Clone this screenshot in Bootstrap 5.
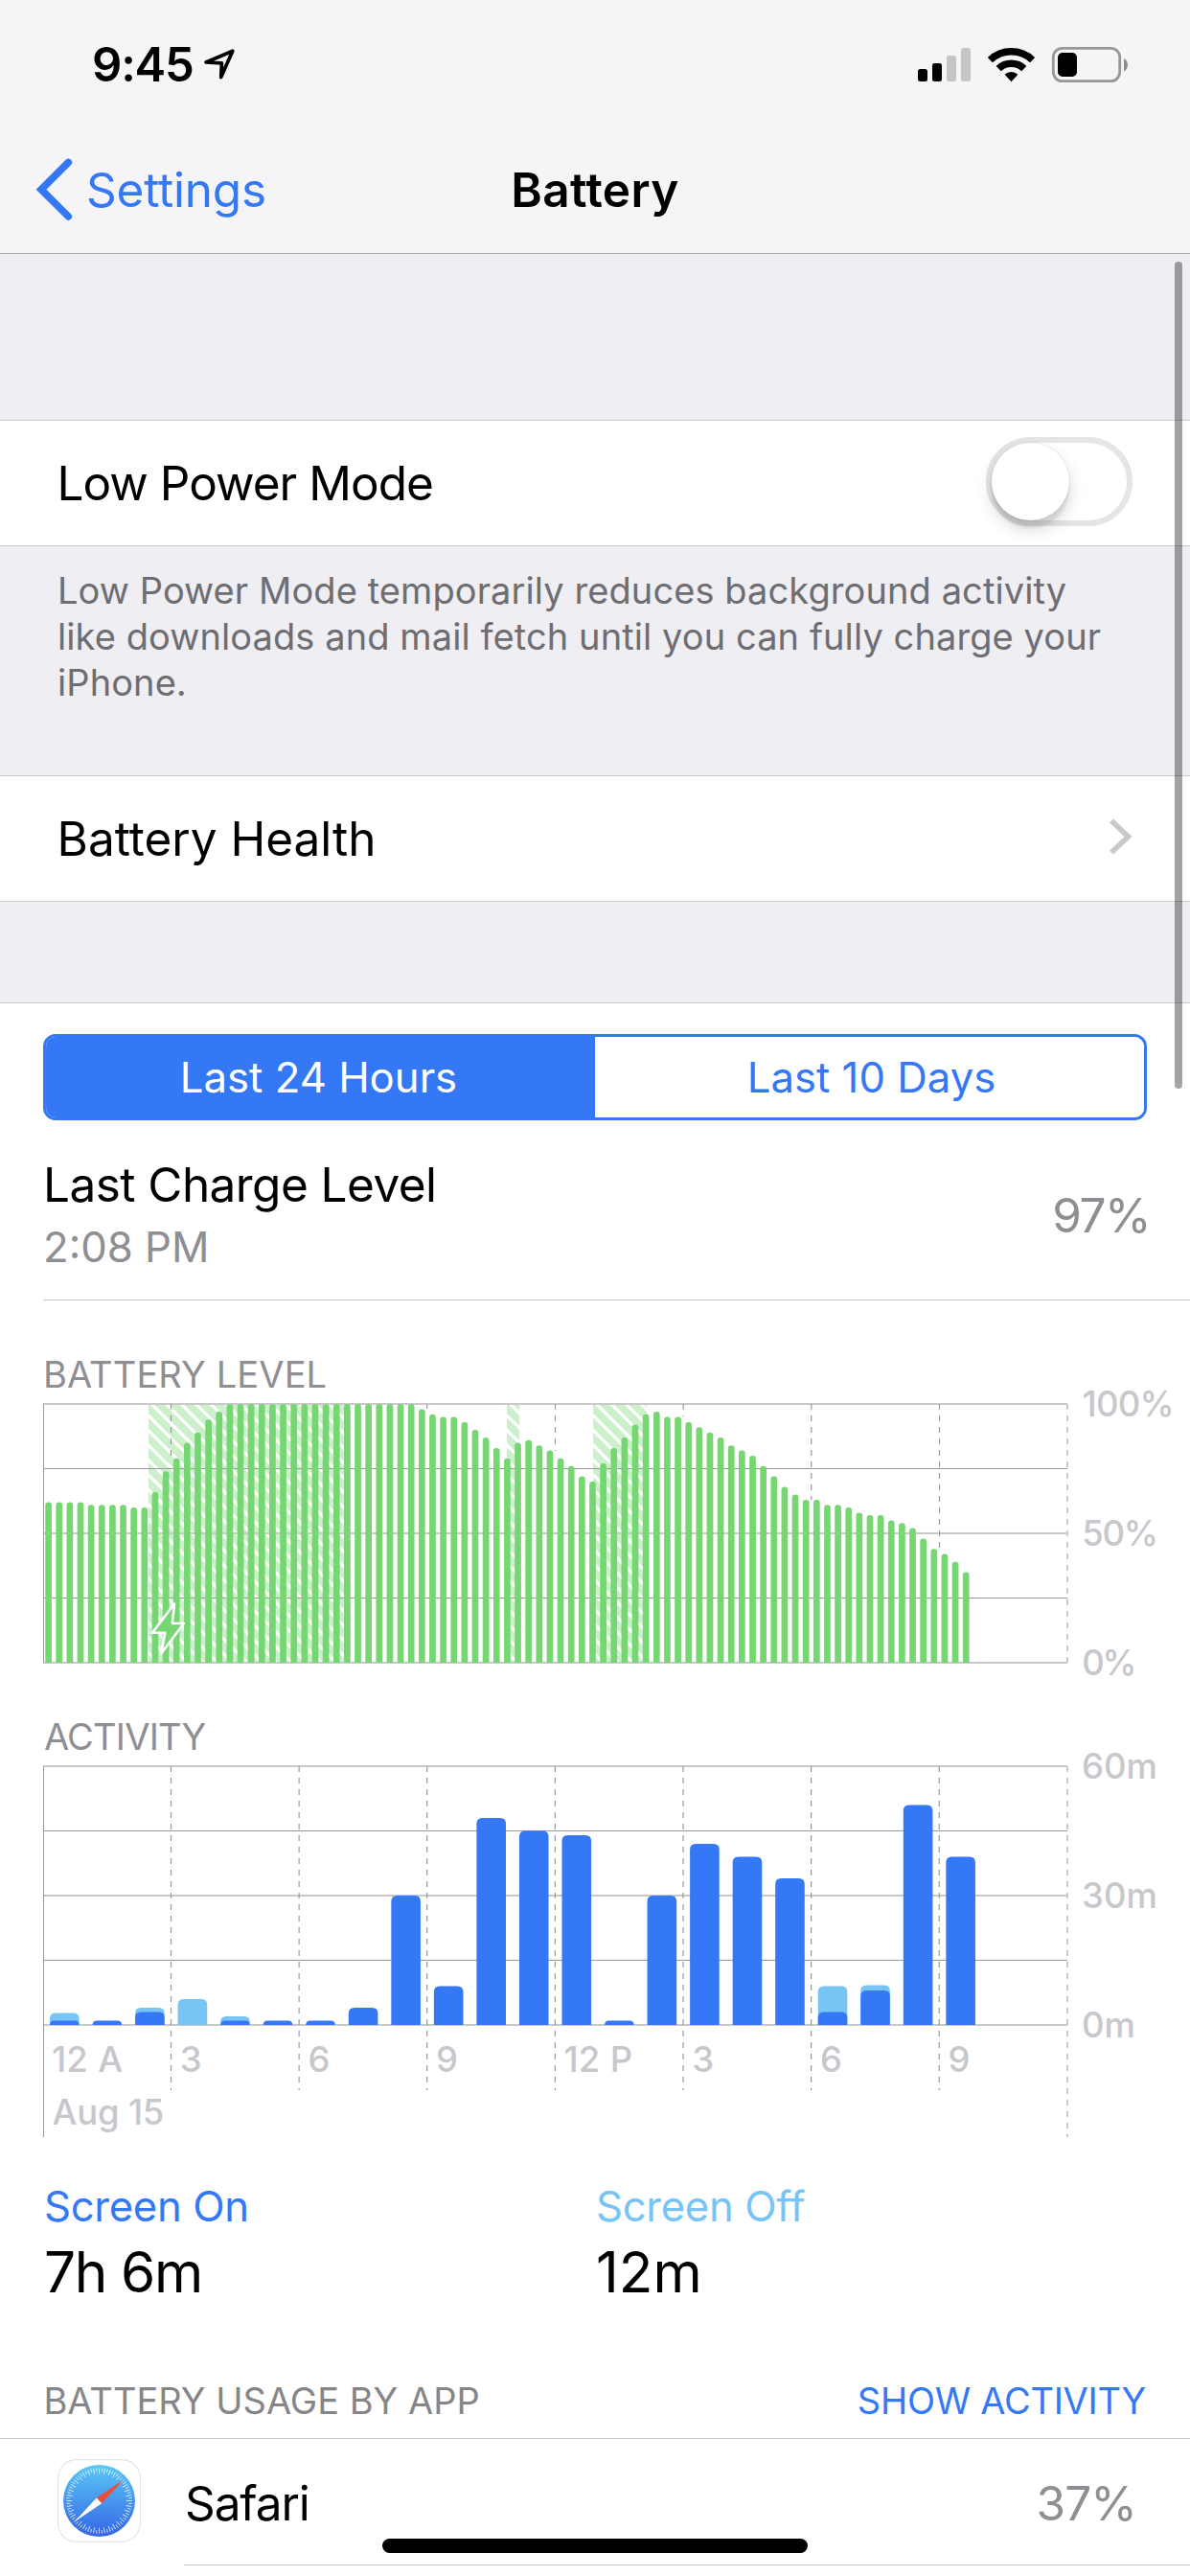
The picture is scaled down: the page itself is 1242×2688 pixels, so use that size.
<!DOCTYPE html>
<html lang="en">
<head>
<meta charset="utf-8">
<meta name="viewport" content="width=device-width, initial-scale=1">
<title>Battery</title>
<link href="https://cdn.jsdelivr.net/npm/bootstrap@5.3.0/dist/css/bootstrap.min.css" rel="stylesheet">
<style>
  :root { --tint: #3478f6; --sky: #78c4f5; --hair: #c8c7cc; --dim: #8e8e93; }
  html, body { overflow: hidden; }
  body { width: 1242px; height: 2688px; background: #efeef3; color: #000; font-family: Inter, "Liberation Sans", sans-serif; font-size: 49.5px; }
  svg { display: block; flex: none; overflow: visible; }
  .top-bar { height: 265px; background: #f5f5f7; border-bottom: 1px solid #a9a9ac; }
  .status-row { height: 134px; padding: 0 65px 0 96px; line-height: 134px; }
  .clock { font-weight: 600; font-size: 49px; letter-spacing: -1.2px; padding-top: 2px; }
  .nav-row { height: 130px; padding-bottom: 2px; line-height: 128px; }
  .nav-back { width: 400px; padding-left: 36px; color: var(--tint); letter-spacing: -.2px; text-decoration: none; }
  .nav-title { font-size: 49.5px; font-weight: 600; letter-spacing: .36px; line-height: inherit; }
  .gap-top { height: 173px; }
  .gap-mid { height: 105px; }
  .cell-row { height: 132px; padding: 0 60px 0 59.5px; background: #fff; border-top: 1px solid var(--hair); border-bottom: 1px solid var(--hair); }
  .cell-note { height: 239px; padding: 22px 60px 0 60px; color: #6d6d72; font-size: 38px; line-height: 48px; letter-spacing: .09px; }
  .toggle { width: 153px; height: 93px; margin-bottom: 3px; border: 6px solid #e5e5e5; border-radius: 47px; background: #fff; }
  .toggle-knob { width: 81px; height: 81px; border-radius: 50%; background: #fff; box-shadow: 0 9px 18px rgba(0,0,0,.16), 0 8px 3px rgba(0,0,0,.08), 0 0 2px rgba(0,0,0,.15); }
  .panel { background: #fff; border-top: 1px solid var(--hair); flex: 1 1 auto; padding-top: 32px; }
  .segments { margin: 0 45px; height: 90px; border: 3px solid var(--tint); border-radius: 13px; overflow: hidden; display: flex; }
  .segments .btn { font-size: 43.7px; line-height: 85px; border: 0; border-radius: 0; color: var(--tint); background: #fff; padding: 0 0 0 4px; }
  .segments .btn.active { background: var(--tint); color: #fff; padding: 0 4px 0 0; }
  .charge { margin-left: 45px; padding: 34px 42px 21px 0; border-bottom: 1px solid var(--hair); }
  .charge-title { line-height: 66px; letter-spacing: -.55px; }
  .charge-time { line-height: 66px; font-size: 43.7px; color: var(--dim); }
  .pct { color: var(--dim); letter-spacing: -1.57px; }
  .charge .pct { padding-bottom: 2px; }
  .caption { font-size: 38px; line-height: 46px; color: var(--dim); padding-left: 45px; }
  .cap-battery { margin-top: 54px; letter-spacing: .12px; }
  .cap-activity { letter-spacing: -.8px; padding-left: 46px; }
  .axis { font: 500 36.5px Inter, "Liberation Sans", sans-serif; fill: #c7c7cc; }
  .legend-row { margin-top: 22px; padding-left: 46px; }
  .legend-row > div { width: 576px; }
  .leg-name { font-size: 43.7px; line-height: 61px; letter-spacing: -.35px; }
  .leg-val { font-size: 58.5px; line-height: 76px; }
  .usage-head { margin-top: 73px; padding: 0 46px 16px 45.5px; font-size: 38px; line-height: 46px; color: #868688; }
  .usage-head a { color: var(--tint); text-decoration: none; letter-spacing: -.27px; }
  .app-row { border-top: 1px solid var(--hair); padding-left: 60px; }
  .app-icon { margin-top: 21px; }
  .app-body { margin-left: 45px; height: 132px; padding: 0 56px 0 1px; border-bottom: 1px solid var(--hair); line-height: 134px; }
  .scroll-thumb { position: absolute; left: 1226px; top: 273px; width: 8px; height: 863px; border-radius: 4px; background: rgba(0,0,0,.36); }
  .home-bar { position: absolute; left: 399px; top: 2649px; width: 444px; height: 15px; border-radius: 7.5px; background: #000; }
</style>
</head>
<body class="d-flex flex-column position-relative">

<header class="top-bar">
  <div class="status-row d-flex align-items-center">
    <span class="clock">9:45</span>
    <svg class="ms-2" width="36" height="36" viewBox="211 50 36 36"><path d="M243.800 54.200 216 66 232.400 66.900 231.700 81.600Z" fill="none" stroke="#000" stroke-width="3.700" stroke-linejoin="round"/></svg>
    <svg class="ms-auto" width="222" height="40" viewBox="955 47 222 40">
      <rect x="958" y="72" width="10" height="13" rx="2.5"/><rect x="973" y="66" width="10" height="19" rx="2.5"/>
      <g fill="#c5c5c7"><rect x="988" y="58" width="10" height="27" rx="2.5"/><rect x="1003" y="50" width="10" height="35" rx="2.5"/></g>
      <g fill="none" stroke="#000" stroke-width="7.4"><path d="M1033.4 62.6a32 32 0 0 1 44.2 0"/><path d="M1042.2 71.6a19.2 19.2 0 0 1 26.6 0"/></g>
      <path d="M1055.500 85.200 1048.600 77.800a10 10 0 0 1 13.800 0Z"/>
      <rect x="1099.300" y="50.300" width="69.400" height="34.400" rx="9.500" fill="none" stroke="#979799" stroke-width="2.800"/>
      <rect x="1104" y="55" width="20" height="25" rx="5"/>
      <path d="M1173 61c5.300 2.400 5.300 11 0 13.400Z" fill="#8d8d8f"/>
    </svg>
  </div>
  <nav class="nav-row d-flex align-items-center">
    <a class="nav-back d-flex align-items-center" href="#">
      <svg width="54" height="66" viewBox="36 166 54 66"><path d="M71.300 170.500 43 198.700 71.300 226.900" fill="none" stroke="#3478f6" stroke-width="7.600" stroke-linecap="round" stroke-linejoin="miter"/></svg>
      <span>Settings</span>
    </a>
    <h1 class="nav-title flex-fill text-center m-0">Battery</h1>
    <span class="nav-back"></span>
  </nav>
</header>

<div class="gap-top"></div>
<div class="cell-row d-flex align-items-center justify-content-between">
  <span style="letter-spacing:-.97px">Low Power Mode</span>
  <span class="toggle" role="switch" aria-checked="false"><span class="toggle-knob d-block"></span></span>
</div>
<p class="cell-note m-0">Low Power Mode temporarily reduces background activity<br>like downloads and mail fetch until you can fully charge your<br>iPhone.</p>
<div class="cell-row d-flex align-items-center justify-content-between">
  <span>Battery Health</span>
  <svg class="mb-1" width="26" height="40" viewBox="1157 854 26 40"><path d="M1161 857.500 1178.500 874 1161 890.500" fill="none" stroke="#c7c7cc" stroke-width="5.600"/></svg>
</div>
<div class="gap-mid"></div>

<main class="panel">
  <div class="segments">
    <button class="btn active w-50" type="button">Last 24 Hours</button>
    <button class="btn w-50" type="button">Last 10 Days</button>
  </div>
  <div class="charge d-flex align-items-center justify-content-between">
    <div>
      <div class="charge-title">Last Charge Level</div>
      <div class="charge-time">2:08 PM</div>
    </div>
    <span class="pct">97%</span>
  </div>

  <div class="caption cap-battery">BATTERY LEVEL</div>
  <svg id="levelChart" width="1242" height="332" viewBox="0 1457 1242 332"></svg>
  <div class="caption cap-activity">ACTIVITY</div>
  <svg id="activityChart" width="1242" height="415" viewBox="0 1835 1242 415"></svg>

  <div class="legend-row d-flex">
    <div><div class="leg-name" style="color:var(--tint)">Screen On</div><div class="leg-val" style="letter-spacing:-1.36px">7h 6m</div></div>
    <div><div class="leg-name" style="color:var(--sky)">Screen Off</div><div class="leg-val">12m</div></div>
  </div>

  <div class="usage-head d-flex justify-content-between"><span>BATTERY USAGE BY APP</span><a href="#">SHOW ACTIVITY</a></div>
  <div class="app-row d-flex">
    <svg class="app-icon" width="87" height="87" viewBox="0 0 87 87">
      <defs><linearGradient id="sea" x1="0" y1="0" x2="0" y2="1"><stop offset="0" stop-color="#5ac8f5"/><stop offset="1" stop-color="#3565e6"/></linearGradient></defs>
      <rect x=".6" y=".6" width="85.800" height="85.800" rx="19.500" fill="#fff" stroke="#e3e3e5" stroke-width="1.100"/>
      <circle cx="43.500" cy="43.500" r="37.500" fill="url(#sea)"/>
      <g id="ticks" stroke="#fff" stroke-width=".8" stroke-opacity=".9"></g>
      <path d="M69.300 21.300 40.700 40.600 46.200 46.300Z" fill="#eb4d3d"/>
      <path d="M17.300 65.700 40.700 40.600 46.200 46.300Z" fill="#fff"/>
    </svg>
    <div class="app-body flex-fill d-flex justify-content-between">
      <span style="letter-spacing:-1.1px">Safari</span><span class="pct" style="letter-spacing:-.9px">37%</span>
    </div>
  </div>
</main>

<div class="scroll-thumb"></div>
<div class="home-bar"></div>

<script src="https://cdn.jsdelivr.net/npm/bootstrap@5.3.0/dist/js/bootstrap.bundle.min.js"></script>
<script>
const X0 = 45.4, X1 = 1114, HOUR = 44.54;
const rect = (x, y, w, h, f) => `<rect x="${x}" y="${y}" width="${w}" height="${h}" fill="${f}"/>`;
const text = (x, y, s, ls) => `<text class="axis" x="${x}" y="${y}" letter-spacing="${ls || 0}">${s}</text>`;
const dash = (x, y1, y2, heavy) => `<path d="M${x} ${y1}V${y2}" stroke="${heavy ? '#c9c9c9' : '#999'}" stroke-width="${heavy ? 2 : 1.2}" stroke-dasharray="6 6"/>`;
const bar = (x, y, w, b, r, f) => { r = Math.min(r, b - y); return `<path d="M${x} ${b}V${y + r}q0 ${-r} ${r} ${-r}H${x + w - r}q${r} 0 ${r} ${r}V${b}Z" fill="${f}"/>`; };
const grid = top => [0, 1, 2, 3, 4].map(i => i % 2
  ? rect(45, top + Math.round(67.5 * i), X1 - 45, 1, '#999')
  : rect(45, top + 135 * i / 2, X1 - 45, 2, '#c9c9c9')).join('');

// Battery level, one sample per 15 minutes
const level = [62,62,62,62,61,61,61,61,60,60,66,74,79,85,89,94,97,100,100,100,100,100,100,100,100,100,100,100,100,100,100,100,100,100,100,
  98,96,95,95,93,90,87,83,79,85,86,84,82,79,76,72,70,77,83,87,92,96,97,95,95,93,91,89,87,84,82,80,76,72,68,65,63,63,61,61,60,58,57,57,55,54,52,48,44,42,39,35];
let s = '<defs>';
const zones = [[154.7, 359.3], [529, 542], [619, 675]];
zones.forEach(([a, b], i) => s += `<clipPath id="z${i}"><rect x="${a}" y="1465" width="${b - a}" height="270"/></clipPath>`);
s += '</defs>';
zones.forEach(([a, b], i) => {
  s += `<g clip-path="url(#z${i})">` + rect(a, 1465, b - a, 270, '#cbf0cb');
  for (let y = 1477 - 15.45 * 14; y < 1740; y += 15.45) s += `<path d="M${a - 5} ${y - 5}L${b + 5} ${y + b - a + 5}" stroke="#fff" stroke-width="3.3"/>`;
  s += '</g>';
});
s += grid(1464) + rect(45, 1465, 1, 270, '#999');
[[178.5, 1519], [445.7, 1470], [579.5, 1514], [713.2, 1478], [846.8, 1565], [980.5, 1615]].forEach(([x, y]) => s += dash(x, 1465, y));
s += dash(X1, 1465, 1735, true);
level.forEach((v, i) => s += bar(47.25 + 11.135 * i, 1735 - 2.7 * v, 6.7, 1735, 3.2, '#76d672'));
s += '<path d="M182 1673.500 179.800 1694H191.800L168.200 1725.500 172.300 1703.800H159Z" fill="#76d672" stroke="#fff" stroke-width="2.600" stroke-linejoin="round"/>';
s += text(1129.500, 1478, '100%', -.76) + text(1129.300, 1613, '50%', -1.3) + text(1129.300, 1748, '0%', -2.6);
levelChart.innerHTML = s;

// Minutes of use per hour: [screen on, total]
const use = [[1,2.8],[1,1],[3,4],[0,6],[1,2],[1,1],[1,1],[4,4],[30,30],[9,9],[48,48],[45,45],[44,44],[1,1],[30,30],[42,42],[39,39],[34,34],[3,9],[8,9.2],[51,51],[39,39]];
s = grid(1842) + rect(45, 1843, 1, 387, '#999');
for (let k = 1; k < 8; k++) s += dash(X0 + k * 3 * HOUR - .5, 1843, 2181);
s += dash(X1, 1843, 2230, true);
use.forEach(([on, all], i) => {
  const x = 52 + HOUR * i;
  if (all > on) s += bar(x, 2113 - 4.5 * all, 30.6, 2113, 6, '#78c4f5');
  if (on) s += bar(x, 2113 - 4.5 * on, 30.6, 2113, 6, '#3478f6');
});
['12 A', 3, 6, 9, '12 P', 3, 6, 9].forEach((t, k) => s += text((k % 4 ? 54.2 : 53.9) + k * 3 * HOUR, 2162, t, k % 4 ? 0 : .3));
s += text(54.500, 2217, 'Aug 15', -.2);
s += text(1129, 1856, '60m') + text(1129, 1991, '30m') + text(1129, 2126, '0m');
activityChart.innerHTML = s;

// Compass dial
s = '';
for (let i = 0; i < 72; i++) s += `<path d="M43.500 9.300V${i % 2 ? 12.800 : 15.300}" transform="rotate(${i * 5} 43.500 43.500)"/>`;
ticks.innerHTML = s;
</script>
</body>
</html>
